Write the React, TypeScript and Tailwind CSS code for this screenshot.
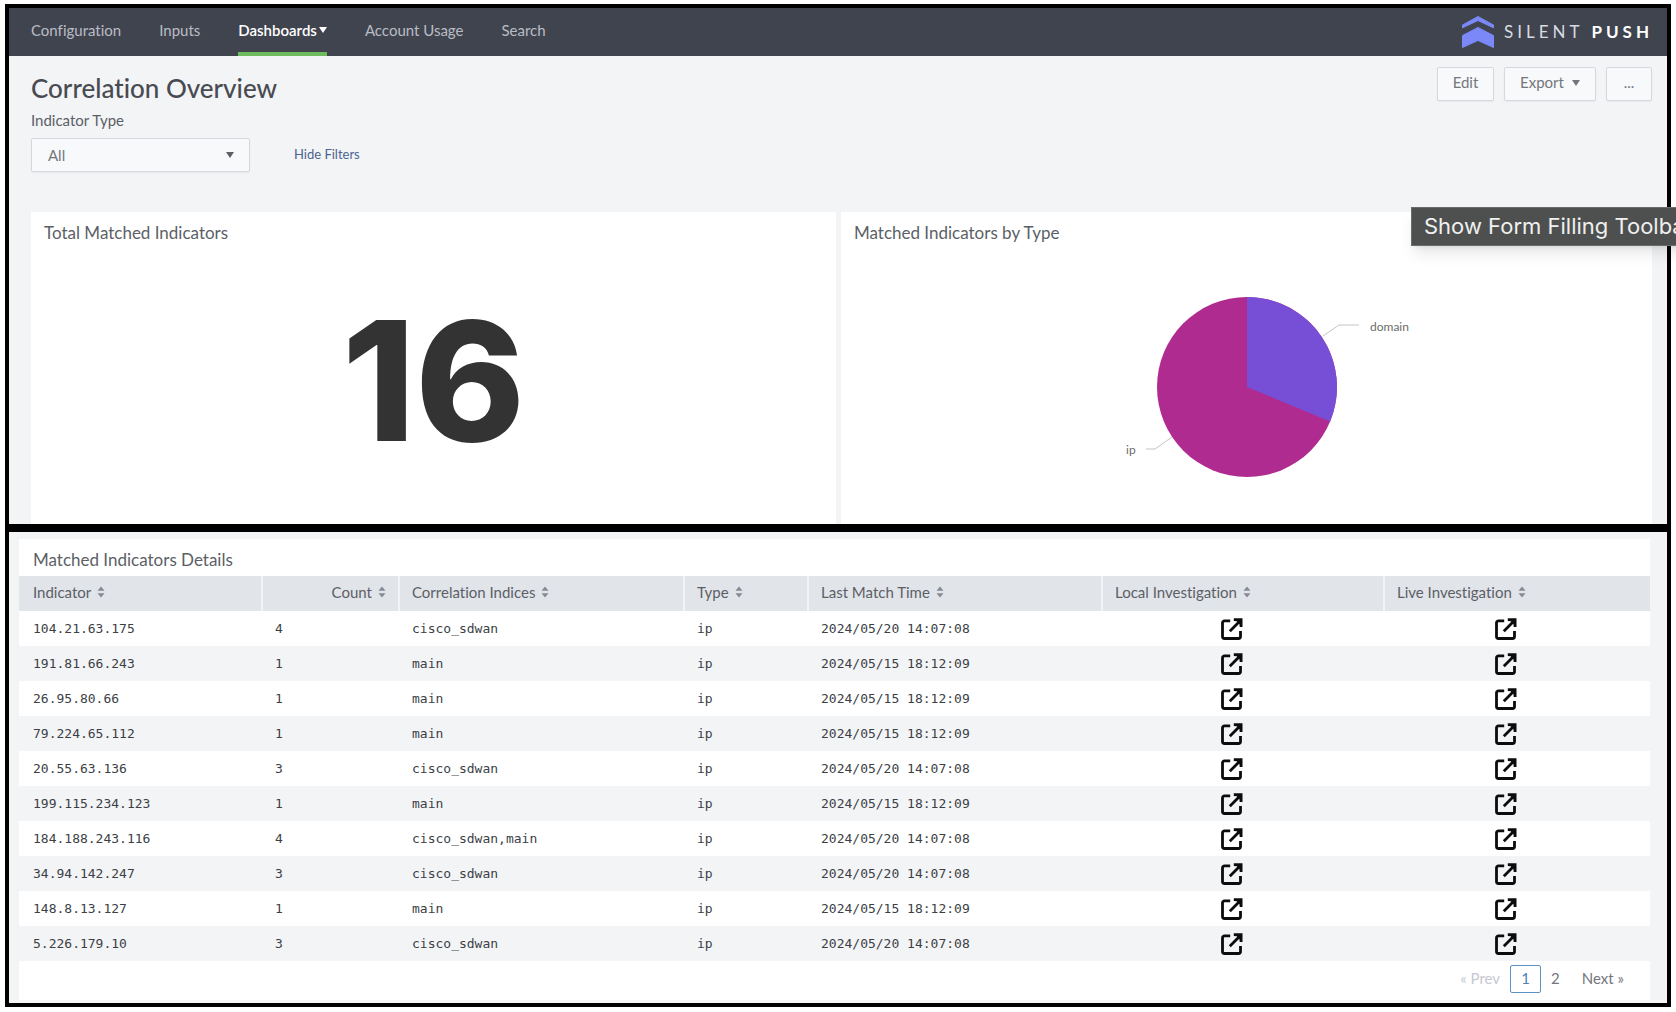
import React from "react";

const NAV = ["Configuration", "Inputs", "Dashboards", "Account Usage", "Search"];

type Row = [ip: string, count: number, indices: string, time: string];

const MAY_20 = "2024/05/20 14:07:08";
const MAY_15 = "2024/05/15 18:12:09";

const ROWS: Row[] = [
  ["104.21.63.175", 4, "cisco_sdwan", MAY_20],
  ["191.81.66.243", 1, "main", MAY_15],
  ["26.95.80.66", 1, "main", MAY_15],
  ["79.224.65.112", 1, "main", MAY_15],
  ["20.55.63.136", 3, "cisco_sdwan", MAY_20],
  ["199.115.234.123", 1, "main", MAY_15],
  ["184.188.243.116", 4, "cisco_sdwan,main", MAY_20],
  ["34.94.142.247", 3, "cisco_sdwan", MAY_20],
  ["148.8.13.127", 1, "main", MAY_15],
  ["5.226.179.10", 3, "cisco_sdwan", MAY_20],
];

const COLUMNS = [
  { label: "Indicator", width: "w-[243px]", align: "text-left" },
  { label: "Count", width: "w-[137px]", align: "text-right" },
  { label: "Correlation Indices", width: "w-[285px]", align: "text-left" },
  { label: "Type", width: "w-[124px]", align: "text-left" },
  { label: "Last Match Time", width: "w-[294px]", align: "text-left" },
  { label: "Local Investigation", width: "w-[282px]", align: "text-left" },
  { label: "Live Investigation", width: "w-[266px]", align: "text-left" },
];

function Caret({ className }: { className?: string }) {
  return (
    <svg viewBox="0 0 8 6" className={`h-[6px] w-2 ${className ?? ""}`} fill="currentColor" aria-hidden="true">
      <path d="M0 0h8L4 6z" />
    </svg>
  );
}

function SortIcon() {
  return (
    <svg viewBox="0 0 8 12" className="h-3 w-2" fill="#868a94" aria-hidden="true">
      <path d="M4 0.5 7.5 4.8H0.5zM4 11.5 0.5 7.2H7.5z" />
    </svg>
  );
}

function OpenIcon() {
  return (
    <svg viewBox="0 0 24 24" className="size-6" fill="none" stroke="#0c0c0c" strokeWidth="2.8" aria-hidden="true">
      <path d="M10.200 3.800H4.500a2 2 0 0 0-2 2v13.700a2 2 0 0 0 2 2h14a2 2 0 0 0 2-2V14" />
      <path d="M9.800 14.200 20 4" />
      <path d="M13.800 1.200h8.700v8.900h-2.800l-0.300-3.200-2.700-2.700-2.900-0.200z" fill="#0c0c0c" stroke="none" />
    </svg>
  );
}

function Logo() {
  return (
    <div className="flex items-center gap-[10px] text-white">
      <svg
        viewBox="0 0 32 32"
        className="size-8"
        fill="#7b88f7"
        stroke="#7b88f7"
        strokeWidth="1"
        strokeLinejoin="round"
        aria-hidden="true"
      >
        <path d="M16 0.500 31.500 9V11.800L16 4.500 0.500 11.800V9z" />
        <path d="M16 11.500 31.500 19.500V31.500L16 24.500 0.500 31.500V19.500z" />
      </svg>
      <span className="text-[17px] font-normal tracking-[4px] text-[#d9dbe0]">
        SILENT <b className="font-bold text-white">PUSH</b>
      </span>
    </div>
  );
}

function Pie() {
  return (
    <svg viewBox="-10 0 340 200" className="h-[200px] w-[340px]" role="img" aria-label="Matched indicators by type">
      <circle cx="160" cy="100" r="90" fill="#af2b90" />
      <path d="M160 100V10A90 90 0 0 1 243.100 134.400z" fill="#774fd6" />
      <path d="M236 49 252 38H272M85 150 68 162H59" fill="none" stroke="#c4c4c4" />
      <text x="283" y="44" fontSize="12" fill="#6b6b6b">domain</text>
      <text x="39" y="167" fontSize="12" fill="#6b6b6b">ip</text>
    </svg>
  );
}

const BUTTON =
  "flex h-[34px] items-center justify-center rounded-xs border border-[#d5d9df] bg-[#f8f9fb] pb-[3px] text-[15px] text-[#74767d] shadow-xs";

export default function App() {
  return (
    <div className="relative overflow-hidden bg-white px-[5px] pt-1 pb-1 font-['Lato',sans-serif] text-[#5c5f66] [font-variant-ligatures:none]">
      <section className="border-4 border-black bg-[#f3f4f6]">
        <header className="flex h-12 items-center justify-between bg-[#40444f] pr-[14px] pl-[22px]">
          <nav className="flex h-full gap-[38px] text-[15px]">
            {NAV.map((item) =>
              item === "Dashboards" ? (
                <a
                  key={item}
                  href="#dashboards"
                  className="flex items-center gap-[2px] border-b-4 border-[#6dbb5c] font-semibold text-white"
                >
                  {item}
                  <Caret />
                </a>
              ) : (
                <a key={item} href="#nav" className="flex items-center pb-1 text-[#b9bcc4]">
                  {item}
                </a>
              ),
            )}
          </nav>
          <Logo />
        </header>

        <div className="flex justify-between pt-[11px] pr-[15px] pl-[22px]">
          <div>
            <h1 className="pt-[3px] text-[26px] leading-9 font-medium text-[#484b52]">Correlation Overview</h1>
            <label htmlFor="type" className="mt-1 block text-[15px] leading-5">
              Indicator Type
            </label>
            <div className="mt-2 flex items-center gap-11">
              <div className="relative">
                <select
                  id="type"
                  className="block h-[34px] w-[219px] appearance-none rounded-xs border border-[#d5d9df] bg-[#f8f9fb] px-4 text-[15px] text-[#74767d] shadow-xs"
                >
                  <option>All</option>
                </select>
                <Caret className="pointer-events-none absolute top-[14px] right-4" />
              </div>
              <a href="#filters" className="text-[13px] text-[#4b6590]">
                Hide Filters
              </a>
            </div>
          </div>
          <div className="flex gap-[10px]">
            <button className={`${BUTTON} w-[57px]`}>Edit</button>
            <button className={`${BUTTON} w-[92px] gap-2`}>
              Export <Caret />
            </button>
            <button className={`${BUTTON} w-[46px]`}>...</button>
          </div>
        </div>

        <div className="mt-10 grid grid-cols-[805fr_811fr] gap-[5px] pr-[15px] pl-[22px]">
          <article className="h-[312px] bg-white px-[13px] pt-[9px]">
            <h2 className="text-[17px] leading-6">Total Matched Indicators</h2>
            <p className="mt-[33px] text-center font-['Inter',sans-serif] text-[166px] leading-[206px] font-extrabold text-[#333]">
              16
            </p>
          </article>
          <article className="flex h-[312px] flex-col items-center bg-white px-[13px] pt-[9px]">
            <h2 className="self-start text-[17px] leading-6">Matched Indicators by Type</h2>
            <div className="mt-[42px]">
              <Pie />
            </div>
          </article>
        </div>
      </section>

      <section className="border-4 border-black bg-[#f3f4f6] pt-[7px] pr-[17px] pb-[3px] pl-[10px]">
        <div className="bg-white">
          <h2 className="px-[14px] pt-[9px] pb-1 text-[17px] leading-6">Matched Indicators Details</h2>
          <table className="w-full table-fixed border-collapse">
            <thead>
              <tr className="h-[35px] bg-[#e1e4e9] text-[15px]">
                {COLUMNS.map((c) => (
                  <th
                    key={c.label}
                    className={`${c.width} ${c.align} border-l-2 border-[#f3f4f6] px-3 pt-0 pb-[3px] font-normal first:border-l-0 first:pl-[14px]`}
                  >
                    <button className="inline-flex items-center gap-[6px]">
                      {c.label}
                      <SortIcon />
                    </button>
                  </th>
                ))}
              </tr>
            </thead>
            <tbody className="font-['DejaVu_Sans_Mono',monospace] text-[13px] text-[#3c3f46]">
              {ROWS.map(([ip, count, indices, time]) => (
                <tr key={ip} className="h-[35px] even:bg-[#f3f4f6]">
                  <td className="px-[14px] py-0">{ip}</td>
                  <td className="px-[13px] py-0">{count}</td>
                  <td className="px-[13px] py-0">{indices}</td>
                  <td className="px-[13px] py-0">ip</td>
                  <td className="px-[13px] py-0">{time}</td>
                  <td className="py-0 pr-[22px]">
                    <a href="#local" aria-label={`Local investigation of ${ip}`} className="flex justify-center">
                      <OpenIcon />
                    </a>
                  </td>
                  <td className="py-0 pr-[22px]">
                    <a href="#live" aria-label={`Live investigation of ${ip}`} className="flex justify-center">
                      <OpenIcon />
                    </a>
                  </td>
                </tr>
              ))}
            </tbody>
          </table>
          <nav
            className="flex h-[39px] items-center justify-end pr-[26px] pb-1 text-[15px] text-[#74767d]"
            aria-label="Pages"
          >
            <button className="text-[#c6c9d0]">« Prev</button>
            <button className="mr-[10px] ml-[10px] h-7 w-[31px] rounded-xs border border-[#5f92c4] text-[#4f7fb5]">
              1
            </button>
            <button className="mr-[22px]">2</button>
            <button>Next »</button>
          </nav>
        </div>
      </section>

      <div
        role="tooltip"
        className="absolute top-[207px] left-[1411px] border border-[#6b6d6c] bg-[#4e504f] px-3 font-['Inter',sans-serif] text-[22px] leading-[37px] whitespace-nowrap text-[#f0f0f0] shadow-lg"
      >
        Show Form Filling Toolbar
      </div>
    </div>
  );
}
